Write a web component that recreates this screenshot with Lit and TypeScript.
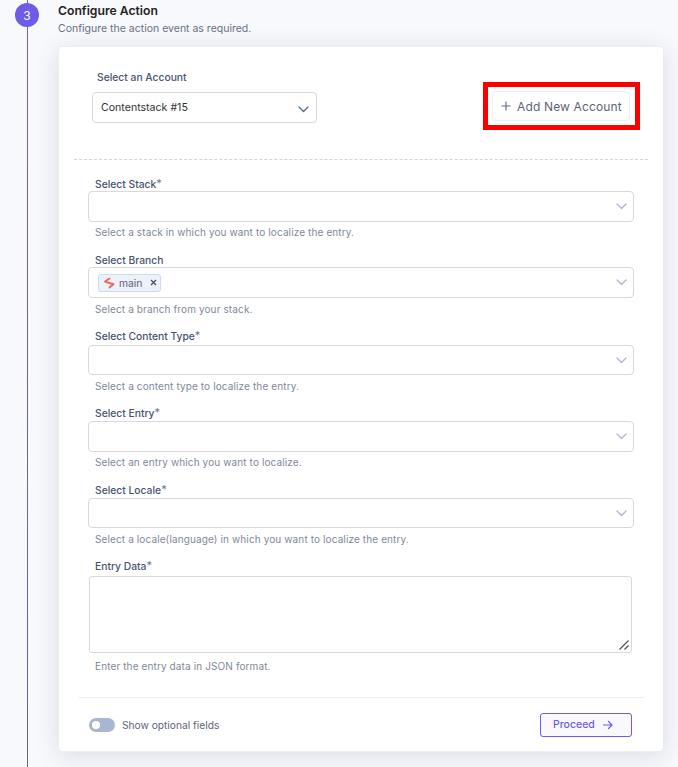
import { LitElement, html, css } from "lit";
import { customElement } from "lit/decorators.js";

const chevron = html`<svg class="chev" width="11" height="7" viewBox="0 0 11 7" fill="none"><path d="M1 1l4.500 4.500L10 1" stroke="currentColor" stroke-width="1.300" stroke-linecap="round" stroke-linejoin="round"/></svg>`;

const fields = [
  { label: "Select Stack", req: true, help: "Select a stack in which you want to localize the entry.", fh: 77, lh: 15, h: 31, gap: 4 },
  { label: "Select Branch", req: false, help: "Select a branch from your stack.", fh: 75, lh: 14, h: 31, gap: 5, tag: true },
  { label: "Select Content Type", req: true, help: "Select a content type to localize the entry.", fh: 77, lh: 17, h: 30, gap: 5 },
  { label: "Select Entry", req: true, help: "Select an entry which you want to localize.", fh: 77, lh: 16, h: 31, gap: 4 },
  { label: "Select Locale", req: true, help: "Select a locale(language) in which you want to localize the entry.", fh: 76, lh: 16, h: 30, gap: 5 },
];

@customElement("app-root")
export class AppRoot extends LitElement {
  static styles = css`
    :host { display: block; width: 678px; height: 767px; overflow: hidden; background: #f7f9fd; font-family: Inter, "Noto Sans", sans-serif; position: relative; }
    * { box-sizing: border-box; }
    .line { position: absolute; left: 27px; top: 0; bottom: 0; width: 1px; background: linear-gradient(#6c5ce7 0%, #6a5fc8 55%, #566a7a 100%); }
    .num { position: absolute; left: 15px; top: 3px; width: 24px; height: 24px; border-radius: 50%; background: #6c5ce7; color: #fff; font-size: 12px; display: flex; align-items: center; justify-content: center; }
    .main { padding: 4px 14px 0 58px; display: flex; flex-direction: column; }
    h1 { margin: 0; font-size: 12.2px; line-height: 14px; font-weight: 600; color: #222; }
    .sub { margin-top: 4px; font-size: 10.5px; line-height: 14px; color: #6b7083; }
    .card { margin-top: 10px; height: 706px; background: #fff; border-radius: 4px; border: 1px solid #ecedf2; box-shadow: 0 4px 24px rgba(34,34,60,.13); display: flex; flex-direction: column; }
    .account { display: flex; justify-content: space-between; padding: 24px 18px 0 18px; height: 113px; margin: 0 15px; border-bottom: 1px dashed #d5d5d8; }
    .account-left { width: 225px; }
    .acc-label { padding-left: 5px; font-size: 10.3px; line-height: 13px; font-weight: 500; color: #475470; margin-bottom: 8px; }
    .sel { display: flex; align-items: center; justify-content: space-between; background: #fff; border: 1px solid #d9d9dc; border-radius: 4px; color: #a9b6d1; }
    .acc-sel { height: 31px; padding: 0 7px 0 8px; font-size: 10.6px; color: #333; }
    .acc-sel .chev { color: #55698f; margin-top: 3px; }
    .redbox { margin: 11px -10px 0 0; width: 157px; height: 48px; border: 5px solid #ff0000; padding: 4px 5px 4px 4px; }
    .add { height: 30px; width: 138px; border: 1px solid #edeff5; border-radius: 4px; background: #fff; display: flex; align-items: center; gap: 6px; padding-left: 8px; font-size: 12px; letter-spacing: .15px; color: #5d6478; white-space: nowrap; }
    .form { padding: 16px 29px 0 29px; display: flex; flex-direction: column; }
    .field { display: flex; flex-direction: column; }
    .flabel { font-size: 10.3px; font-weight: 500; line-height: 14px; color: #475470; padding-left: 7px; }
    .req { font-weight: 400; font-size: 11px; color: #6b7690; vertical-align: 1px; }
    .input { padding: 0 6px 0 9px; }
    .help { padding-left: 7px; font-size: 10px; line-height: 13px; letter-spacing: .12px; color: #7f8899; }
    .tag { height: 18px; display: flex; align-items: center; gap: 3px; padding: 0 3px 0 4px; background: #ecf1fa; border: 1px solid #cddcf0; border-radius: 3px; font-size: 10.3px; color: #5d6478; }
    .tag .x { margin-left: 5px; }
    .ta { margin: 0 2px 0 1px; height: 77px; border: 1px solid #d9d9dc; border-radius: 3px; position: relative; background: #fff; }
    .grip { position: absolute; right: 1px; bottom: 1px; }
    .footer { margin: auto 19px 0 19px; height: 54px; border-top: 1px solid #edeff2; display: flex; align-items: center; justify-content: space-between; padding: 0 12px 0 11px; }
    .toggle-wrap { display: flex; align-items: center; gap: 7px; font-size: 10.2px; color: #60657a; }
    .toggle { width: 26px; height: 14px; border-radius: 7px; background: #a9b6d1; position: relative; }
    .toggle::after { content: ""; position: absolute; left: 3px; top: 3px; width: 8px; height: 8px; border-radius: 50%; background: #fff; }
    .proceed { width: 92px; height: 24px; border: 1px solid #6c5ce7; border-radius: 3px; background: #f9f8ff; color: #6c5ce7; display: flex; align-items: center; gap: 8px; padding-left: 12px; font-size: 10.5px; font-weight: 500; }
  `;

  render() {
    return html`
      <div class="line"></div>
      <div class="num">3</div>
      <div class="main">
        <h1>Configure Action</h1>
        <div class="sub">Configure the action event as required.</div>
        <div class="card">
          <div class="account">
            <div class="account-left">
              <div class="acc-label">Select an Account</div>
              <div class="sel acc-sel"><span>Contentstack #15</span>${chevron}</div>
            </div>
            <div class="redbox">
              <div class="add">
                <svg width="10" height="10" viewBox="0 0 10 10" fill="none"><path d="M5 .5v9M.5 5h9" stroke="#55698f" stroke-width="1.100"/></svg>
                <span>Add New Account</span>
              </div>
            </div>
          </div>
          <div class="form">
            ${fields.map(f => html`
              <div class="field" style="height:${f.fh}px">
                <div class="flabel" style="height:${f.lh}px">${f.label}${f.req ? html`<span class="req">*</span>` : ""}</div>
                <div class="sel input" style="height:${f.h}px">
                  ${f.tag ? html`<span class="tag">
                    <svg width="13" height="12" viewBox="0 0 13 12" fill="none"><path d="M6.500 1.500 2 4.500l8.500 2.700-4 3.300" stroke="#ee6a5c" stroke-width="2" stroke-linecap="round" stroke-linejoin="round"/></svg>
                    <span>main</span>
                    <svg class="x" width="7" height="7" viewBox="0 0 7 7" fill="none"><path d="M1 1l5 5M6 1 1 6" stroke="#475161" stroke-width="1.300"/></svg>
                  </span>` : html`<span></span>`}
                  ${chevron}
                </div>
                <div class="help" style="margin-top:${f.gap}px">${f.help}</div>
              </div>
            `)}
            <div class="field">
              <div class="flabel" style="height:18px">Entry Data<span class="req">*</span></div>
              <div class="ta">
                <svg class="grip" width="12" height="12" viewBox="0 0 12 12" fill="none"><path d="M1.500 10.500 10.500 1.500M6.500 10.500l4-4" stroke="#555" stroke-width="1.300"/></svg>
              </div>
              <div class="help" style="margin-top:7px">Enter the entry data in JSON format.</div>
            </div>
          </div>
          <div class="footer">
            <div class="toggle-wrap"><span class="toggle"></span><span>Show optional fields</span></div>
            <div class="proceed"><span>Proceed</span>
              <svg width="10" height="10" viewBox="0 0 10 10" fill="none"><path d="M.5 5h8.500M5.500 1.500 9 5 5.500 8.500" stroke="#6c5ce7" stroke-width="1.200" stroke-linecap="round" stroke-linejoin="round"/></svg>
            </div>
          </div>
        </div>
      </div>
    `;
  }
}
